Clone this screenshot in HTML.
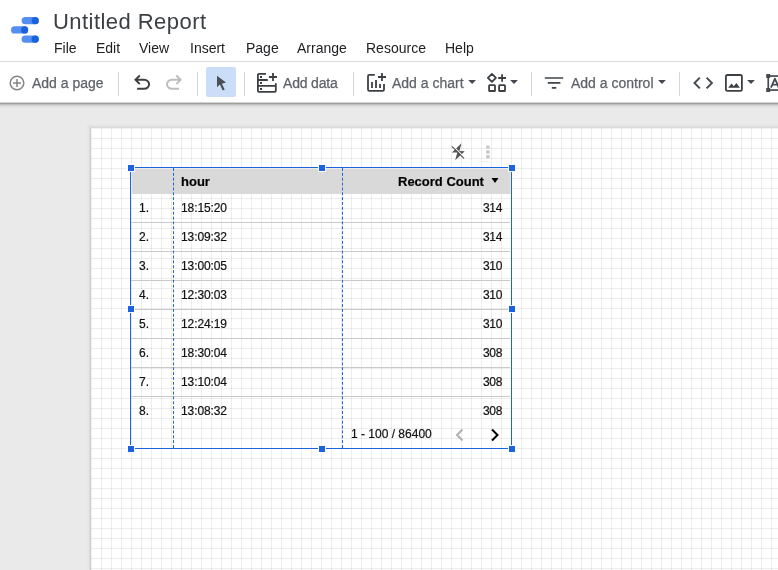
<!DOCTYPE html>
<html>
<head>
<meta charset="utf-8">
<title>Untitled Report</title>
<style>
html,body{margin:0;padding:0;}
body{width:778px;height:570px;overflow:hidden;background:#eaeaea;font-family:"Liberation Sans",sans-serif;position:relative;}
.abs{position:absolute;}
.t{position:absolute;white-space:nowrap;line-height:1;will-change:transform;}
#header{left:0;top:0;width:778px;height:61px;background:#fff;}
#hline{left:0;top:61px;width:778px;height:1px;background:#d8dade;}
#toolbar{left:0;top:62px;width:778px;height:40px;background:#fff;}
#tshadow{left:0;top:102px;width:778px;height:6px;background:linear-gradient(to bottom,#d4d4d4 0,#d4d4d4 1px,#9e9e9e 1px,#9e9e9e 2px,#c0c0c0 2px,#c0c0c0 3px,#d6d6d6 3px,#d6d6d6 4px,#e0e0e0 4px,#e0e0e0 5px,#e6e6e6 5px,#e6e6e6 6px);}
.menu{font-size:14px;color:#202124;top:41px;}
.tb{font-size:14px;color:#5f6368;top:76px;-webkit-text-stroke:0.25px #5f6368;}
.sep{position:absolute;top:72px;width:1px;height:24px;background:#d6d6d6;}
#page{left:91px;top:128px;width:700px;height:460px;background:#fff;box-shadow:inset 1px 1px 0 rgba(0,0,0,.055);overflow:hidden;}
#pshl{left:87px;top:128px;width:4px;height:460px;background:linear-gradient(to right,#e8e8e8 0,#e8e8e8 1px,#e5e5e5 1px,#e5e5e5 2px,#dedede 2px,#dedede 3px,#cdcdcd 3px,#cdcdcd 4px);}
#pshc{left:87px;top:124px;width:4px;height:4px;background:radial-gradient(circle at 100% 100%,#d6d6d6 0,#e2e2e2 40%,#eaeaea 100%);}
#psht{left:91px;top:124px;width:700px;height:4px;background:linear-gradient(to bottom,#e8e8e8 0,#e8e8e8 1px,#e5e5e5 1px,#e5e5e5 2px,#e1e1e1 2px,#e1e1e1 3px,#dadada 3px,#dadada 4px);}
#gv{left:10px;top:0;width:700px;height:460px;background:linear-gradient(to right,rgba(0,0,0,.072) 1px,transparent 1px) 0 0/10px 10px;}
#gh{left:0;top:10px;width:700px;height:460px;background:linear-gradient(to bottom,rgba(0,0,0,.072) 1px,transparent 1px) 0 0/10px 10px;}
.cell{font-size:12px;color:#111;-webkit-text-stroke:0.2px #111;}
.rowline{position:absolute;left:131px;width:379px;height:1px;background:#c9c9c9;}
.hd{position:absolute;width:6px;height:6px;background:#1b63e0;border:1px solid #fff;}
</style>
</head>
<body>
<div id="header" class="abs"></div>
<div id="hline" class="abs"></div>
<div id="toolbar" class="abs"></div>
<div id="tshadow" class="abs"></div>

<!-- logo -->
<svg class="abs" style="left:0;top:0" width="50" height="60" viewBox="0 0 50 60">
  <rect x="21.6" y="17.1" width="17.2" height="7.2" rx="3.6" fill="#548ff1"/>
  <circle cx="35.2" cy="20.7" r="3.6" fill="#1a62dd"/>
  <rect x="11" y="26.3" width="17.2" height="7.2" rx="3.6" fill="#548ff1"/>
  <circle cx="24.6" cy="29.9" r="3.6" fill="#1a62dd"/>
  <rect x="21.6" y="35.6" width="17.2" height="7.2" rx="3.6" fill="#548ff1"/>
  <circle cx="35.2" cy="39.2" r="3.6" fill="#1a62dd"/>
</svg>

<span id="title" class="t" style="left:53px;top:11px;font-size:22px;letter-spacing:0.45px;color:#3c4043;">Untitled Report</span>

<span id="m1" class="t menu" style="left:54px;">File</span>
<span id="m2" class="t menu" style="left:96px;">Edit</span>
<span id="m3" class="t menu" style="left:139px;">View</span>
<span id="m4" class="t menu" style="left:190px;">Insert</span>
<span id="m5" class="t menu" style="left:246px;">Page</span>
<span id="m6" class="t menu" style="left:297px;">Arrange</span>
<span id="m7" class="t menu" style="left:366px;">Resource</span>
<span id="m8" class="t menu" style="left:445px;">Help</span>

<!-- toolbar -->
<span id="b1" class="t tb" style="left:32px;">Add a page</span>
<span id="b2" class="t tb" style="left:283px;letter-spacing:-0.18px;">Add data</span>
<span id="b3" class="t tb" style="left:392px;">Add a chart</span>
<span id="b4" class="t tb" style="left:571px;">Add a control</span>
<div class="sep" style="left:118px"></div>
<div class="sep" style="left:197px"></div>
<div class="sep" style="left:244px"></div>
<div class="sep" style="left:353px"></div>
<div class="sep" style="left:531px"></div>
<div class="sep" style="left:679px"></div>
<div class="abs" style="left:206px;top:67px;width:30px;height:30px;background:#cbdef9;border-radius:2px;"></div>


<!-- toolbar icons -->
<svg class="abs" style="left:0;top:62px" width="778" height="42" viewBox="0 62 778 42">
  <!-- add page -->
  <g stroke="#858585" stroke-width="1.5" fill="none">
    <circle cx="17" cy="83" r="6.8"/>
    <path d="M13 83 H21 M17 79 V87"/>
  </g>
  <!-- undo -->
  <g transform="translate(130.1,70.8) scale(0.025) translate(0,960)" fill="#3c4043">
    <path d="M280-200v-80h284q63 0 109.500-40T720-420q0-60-46.500-100T564-560H312l104 104-56 56-200-200 200-200 56 56-104 104h252q97 0 166.500 63T800-420q0 94-69.500 157T564-200H280Z"/>
  </g>
  <!-- redo -->
  <g transform="translate(186,70.8) scale(-0.025,0.025) translate(0,960)" fill="#bdbdbd">
    <path d="M280-200v-80h284q63 0 109.500-40T720-420q0-60-46.500-100T564-560H312l104 104-56 56-200-200 200-200 56 56-104 104h252q97 0 166.500 63T800-420q0 94-69.500 157T564-200H280Z"/>
  </g>
  <!-- cursor -->
  <path d="M217 75.8 L217 87.2 L219.9 84.5 L222.7 90.4 L224.7 89.4 L221.9 83.7 L226 82.6 Z" fill="#4a4f54"/>
  <!-- add data -->
  <g stroke="#3c4043" stroke-width="1.8" fill="none" stroke-linejoin="round">
    <path d="M266 73.9 H258.9 Q257.9 73.9 257.9 74.9 V90.8 Q257.9 91.8 258.9 91.8 H274.8 Q275.8 91.8 275.8 90.8 V83.2"/>
    <path d="M257.9 80 H267.8 M257.9 85.9 H275.8"/>
    <path d="M269 77 H277 M273 73 V81"/>
  </g>
  <g fill="#3c4043"><rect x="260" y="76" width="2" height="2"/><rect x="260" y="82" width="2" height="2"/><rect x="260" y="88" width="2" height="2"/></g>
  <!-- add chart -->
  <g stroke="#3c4043" stroke-width="1.8" fill="none" stroke-linejoin="round">
    <path d="M374.8 74.9 H369.3 Q368 74.9 368 76.2 V89.6 Q368 90.9 369.3 90.9 H382.7 Q384 90.9 384 89.6 V84"/>
    <path d="M372 82 V88 M376 80 V88 M380 84 V88"/>
    <path d="M378 77 H386 M382 73 V81"/>
  </g>
  <!-- dropdown arrows -->
  <g fill="#454a50">
    <path d="M468.2 80 H476 L472.1 83.9 Z"/>
    <path d="M510.1 80 H517.9 L514 83.9 Z"/>
    <path d="M658.1 80 H665.9 L662 83.9 Z"/>
    <path d="M747.1 80 H754.9 L751 83.9 Z"/>
  </g>
  <!-- community viz -->
  <g stroke="#3c4043" stroke-width="1.8" fill="none" stroke-linejoin="round">
    <path d="M491.9 73.9 L495.9 77.9 L491.9 81.9 L487.9 77.9 Z"/>
    <path d="M498.2 78 H506 M502.1 74.2 V81.8"/>
    <rect x="489.1" y="85.1" width="5.9" height="5.9" rx="0.6"/>
    <rect x="499.1" y="85.1" width="5.9" height="5.9" rx="0.6"/>
  </g>
  <!-- filter -->
  <g stroke="#40454a" stroke-width="1.7" fill="none">
    <path d="M544.8 78 H563.2 M547.8 82.9 H560.4 M551.8 87.9 H556.3"/>
  </g>
  <!-- code -->
  <g stroke="#484d52" stroke-width="2" fill="none">
    <path d="M699.8 77.6 L694.5 83 L699.8 88.4 M706.6 77.6 L711.9 83 L706.6 88.4"/>
  </g>
  <!-- image -->
  <g stroke="#3c4043" stroke-width="1.8" fill="none">
    <rect x="725.9" y="75" width="16" height="15.8" rx="1.6"/>
  </g>
  <path d="M728.2 87.7 L731.5 83.6 L733.8 86.3 L736.4 83.1 L739.9 87.7 Z" fill="#3c4043"/>
  <!-- text box -->
  <g fill="#454a50">
    <rect x="766.2" y="74" width="4" height="4"/>
    <rect x="766.2" y="88" width="4" height="4"/>
    <rect x="767.4" y="76" width="1.7" height="14"/>
    <rect x="768" y="75.2" width="12" height="1.7"/>
    <rect x="768" y="89.2" width="12" height="1.7"/>
  </g>
  <path d="M771 87.6 L774.9 78.6 L778.8 87.6" stroke-linejoin="round" stroke="#454a50" stroke-width="1.8" fill="none"/>
  <path d="M772.4 84.7 H778.4" stroke="#454a50" stroke-width="1.6" fill="none"/>
</svg>

<!-- canvas page -->
<div id="psht" class="abs"></div><div id="pshc" class="abs"></div><div id="pshl" class="abs"></div>
<div id="page" class="abs"><div id="gv" class="abs"></div><div id="gh" class="abs"></div></div>



<!-- chart header icons -->
<svg class="abs" style="left:440px;top:136px" width="64" height="32" viewBox="440 136 64 32">
  <path d="M461.5 143.2 L451.9 152.4 L457.3 152.6 L455.2 160.3 L464.8 151.2 L459.4 151 Z" fill="#555"/>
  <path d="M452.6 145.6 L464.7 157.7" stroke="#fff" stroke-width="1.1"/>
  <path d="M451.9 146.3 L464 158.4" stroke="#555" stroke-width="1.2"/>
  <rect x="478" y="161" width="13" height="1" fill="#f3f3f3"/>
  <g fill="#c9c9c9"><circle cx="487.9" cy="147.1" r="1.95"/><circle cx="487.9" cy="151.9" r="1.95"/><circle cx="487.9" cy="156.7" r="1.95"/></g>
</svg>

<!-- table -->
<div class="abs" style="left:131px;top:168px;width:380px;height:26px;background:#ececec;"></div>
<div class="abs" style="left:132px;top:169px;width:378px;height:25px;background:#d9d9d9;"></div>
<span id="h1" class="t cell" style="left:180.6px;top:175px;font-weight:bold;font-size:13px;color:#000;">hour</span>
<span id="h2" class="t cell" style="left:398px;top:175px;font-weight:bold;font-size:13px;color:#000;">Record Count</span>
<svg class="abs" style="left:490px;top:177px" width="10" height="8" viewBox="0 0 10 8"><path d="M1.5 1 L8.5 1 L5 6 Z" fill="#000"/></svg>
<span id="r0a" class="t cell" style="left:138.5px;top:202px;">1.</span><span id="r0b" class="t cell" style="letter-spacing:-0.1px;left:181px;top:202px;">18:15:20</span><span id="r0c" class="t cell" style="right:275.6px;letter-spacing:-0.35px;top:202px;">314</span>
<div class="rowline" style="top:222px"></div>
<span id="r1a" class="t cell" style="left:138.5px;top:231px;">2.</span><span id="r1b" class="t cell" style="letter-spacing:-0.1px;left:181px;top:231px;">13:09:32</span><span id="r1c" class="t cell" style="right:275.6px;letter-spacing:-0.35px;top:231px;">314</span>
<div class="rowline" style="top:251px"></div>
<span id="r2a" class="t cell" style="left:138.5px;top:260px;">3.</span><span id="r2b" class="t cell" style="letter-spacing:-0.1px;left:181px;top:260px;">13:00:05</span><span id="r2c" class="t cell" style="right:275.6px;letter-spacing:-0.35px;top:260px;">310</span>
<div class="rowline" style="top:280px"></div>
<span id="r3a" class="t cell" style="left:138.5px;top:289px;">4.</span><span id="r3b" class="t cell" style="letter-spacing:-0.1px;left:181px;top:289px;">12:30:03</span><span id="r3c" class="t cell" style="right:275.6px;letter-spacing:-0.35px;top:289px;">310</span>
<div class="rowline" style="top:309px"></div>
<span id="r4a" class="t cell" style="left:138.5px;top:318px;">5.</span><span id="r4b" class="t cell" style="letter-spacing:-0.1px;left:181px;top:318px;">12:24:19</span><span id="r4c" class="t cell" style="right:275.6px;letter-spacing:-0.35px;top:318px;">310</span>
<div class="rowline" style="top:338px"></div>
<span id="r5a" class="t cell" style="left:138.5px;top:347px;">6.</span><span id="r5b" class="t cell" style="letter-spacing:-0.1px;left:181px;top:347px;">18:30:04</span><span id="r5c" class="t cell" style="right:275.6px;letter-spacing:-0.35px;top:347px;">308</span>
<div class="rowline" style="top:367px"></div>
<span id="r6a" class="t cell" style="left:138.5px;top:376px;">7.</span><span id="r6b" class="t cell" style="letter-spacing:-0.1px;left:181px;top:376px;">13:10:04</span><span id="r6c" class="t cell" style="right:275.6px;letter-spacing:-0.35px;top:376px;">308</span>
<div class="rowline" style="top:396px"></div>
<span id="r7a" class="t cell" style="left:138.5px;top:405px;">8.</span><span id="r7b" class="t cell" style="letter-spacing:-0.1px;left:181px;top:405px;">13:08:32</span><span id="r7c" class="t cell" style="right:275.6px;letter-spacing:-0.35px;top:405px;">308</span>
<span id="pg" class="t cell" style="left:351px;top:428px;">1 - 100 / 86400</span>
<svg class="abs" style="left:452px;top:426.5px" width="16" height="16" viewBox="0 0 16 16"><path d="M10.5 2.5 L5 8 L10.5 13.5" fill="none" stroke="#b0b0b0" stroke-width="2"/></svg>
<svg class="abs" style="left:486px;top:426.5px" width="16" height="16" viewBox="0 0 16 16"><path d="M6 2.5 L11.5 8 L6 13.5" fill="none" stroke="#000" stroke-width="2"/></svg>
<!-- dashed column guides -->
<svg class="abs" style="left:170px;top:168px" width="180" height="281" viewBox="0 0 180 281">
  <line x1="3.5" y1="0" x2="3.5" y2="281" stroke="#1b63e0" stroke-width="1" stroke-dasharray="2.95 1.91"/>
  <line x1="172.5" y1="0" x2="172.5" y2="281" stroke="#1b63e0" stroke-width="1" stroke-dasharray="2.95 1.91"/>
</svg>
<!-- selection -->
<div class="abs" style="left:130px;top:167px;width:380px;height:280px;border:1px solid #1b63e0;"></div>
<div class="hd" style="left:127px;top:164px"></div>
<div class="hd" style="left:318px;top:164px"></div>
<div class="hd" style="left:508px;top:164px"></div>
<div class="hd" style="left:127px;top:305px"></div>
<div class="hd" style="left:508px;top:305px"></div>
<div class="hd" style="left:127px;top:445px"></div>
<div class="hd" style="left:318px;top:445px"></div>
<div class="hd" style="left:508px;top:445px"></div>
</body>
</html>
